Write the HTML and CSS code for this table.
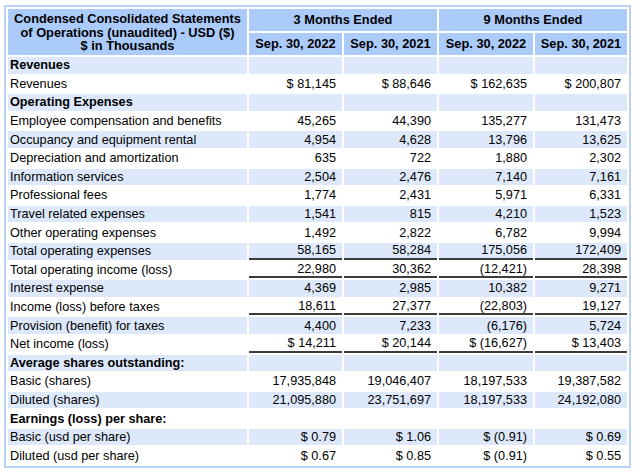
FILE: index.html
```html
<!DOCTYPE html>
<html>
<head>
<meta charset="utf-8">
<link rel="stylesheet" href="styles.css">
</head>
<body>
<div class="frame">
<table class="report">
<colgroup>
<col class="c-label"><col class="c-num"><col class="c-num"><col class="c-num3"><col class="c-num4">
</colgroup>
<thead>
<tr class="h1">
<th rowspan="2" class="title">Condensed Consolidated Statements<br>of Operations (unaudited) - USD ($)<br>$ in Thousands</th>
<th colspan="2">3 Months Ended</th>
<th colspan="2">9 Months Ended</th>
</tr>
<tr class="h2">
<th>Sep. 30, 2022</th><th>Sep. 30, 2021</th><th>Sep. 30, 2022</th><th>Sep. 30, 2021</th>
</tr>
</thead>
<tbody>
<tr class="sec"><td class="pl">Revenues</td><td></td><td></td><td></td><td></td></tr>
<tr><td class="pl">Revenues</td><td>$ 81,145</td><td>$ 88,646</td><td>$ 162,635</td><td>$ 200,807</td></tr>
<tr class="sec"><td class="pl">Operating Expenses</td><td></td><td></td><td></td><td></td></tr>
<tr><td class="pl">Employee compensation and benefits</td><td>45,265</td><td>44,390</td><td>135,277</td><td>131,473</td></tr>
<tr><td class="pl">Occupancy and equipment rental</td><td>4,954</td><td>4,628</td><td>13,796</td><td>13,625</td></tr>
<tr><td class="pl">Depreciation and amortization</td><td>635</td><td>722</td><td>1,880</td><td>2,302</td></tr>
<tr><td class="pl">Information services</td><td>2,504</td><td>2,476</td><td>7,140</td><td>7,161</td></tr>
<tr><td class="pl">Professional fees</td><td>1,774</td><td>2,431</td><td>5,971</td><td>6,331</td></tr>
<tr><td class="pl">Travel related expenses</td><td>1,541</td><td>815</td><td>4,210</td><td>1,523</td></tr>
<tr><td class="pl">Other operating expenses</td><td>1,492</td><td>2,822</td><td>6,782</td><td>9,994</td></tr>
<tr class="tot"><td class="pl">Total operating expenses</td><td>58,165</td><td>58,284</td><td>175,056</td><td>172,409</td></tr>
<tr class="tot"><td class="pl">Total operating income (loss)</td><td>22,980</td><td>30,362</td><td>(12,421)</td><td>28,398</td></tr>
<tr><td class="pl">Interest expense</td><td>4,369</td><td>2,985</td><td>10,382</td><td>9,271</td></tr>
<tr class="tot"><td class="pl">Income (loss) before taxes</td><td>18,611</td><td>27,377</td><td>(22,803)</td><td>19,127</td></tr>
<tr><td class="pl">Provision (benefit) for taxes</td><td>4,400</td><td>7,233</td><td>(6,176)</td><td>5,724</td></tr>
<tr class="tot"><td class="pl">Net income (loss)</td><td>$ 14,211</td><td>$ 20,144</td><td>$ (16,627)</td><td>$ 13,403</td></tr>
<tr class="sec"><td class="pl">Average shares outstanding:</td><td></td><td></td><td></td><td></td></tr>
<tr><td class="pl">Basic (shares)</td><td>17,935,848</td><td>19,046,407</td><td>18,197,533</td><td>19,387,582</td></tr>
<tr><td class="pl">Diluted (shares)</td><td>21,095,880</td><td>23,751,697</td><td>18,197,533</td><td>24,192,080</td></tr>
<tr class="sec"><td class="pl">Earnings (loss) per share:</td><td></td><td></td><td></td><td></td></tr>
<tr><td class="pl">Basic (usd per share)</td><td>$ 0.79</td><td>$ 1.06</td><td>$ (0.91)</td><td>$ 0.69</td></tr>
<tr><td class="pl">Diluted (usd per share)</td><td>$ 0.67</td><td>$ 0.85</td><td>$ (0.91)</td><td>$ 0.55</td></tr>
</tbody>
</table>
</div>
</body>
</html>
```

FILE: styles.css
```css
html, body {
  margin: 0;
  padding: 0;
  background: #ffffff;
}

body {
  font-family: "Liberation Sans", Arial, sans-serif;
  color: #000000;
}

.frame {
  display: inline-block;
  margin: 5px 0 0 4px;
  border: 2px solid #b9d3f8;
}

.report {
  border-collapse: separate;
  border-spacing: 2px;
  table-layout: fixed;
  width: 623px;
  font-size: 12.7px;
}

.c-label { width: 239px; }
.c-num { width: 93px; }
.c-num3 { width: 94px; }
.c-num4 { width: 92px; }

.report th {
  background: #abcbfb;
  font-weight: bold;
  font-size: 12.8px;
  text-align: center;
  padding: 0;
  height: 22px;
  line-height: 14px;
}

.report th.title {
  line-height: 13.5px;
  padding-top: 1px;
}

.report td {
  padding: 0 6px 0 2px;
  height: 16.6px;
  line-height: 14px;
  text-align: right;
  white-space: nowrap;
  box-sizing: border-box;
}

.report td.pl {
  text-align: left;
}

.report tbody tr:nth-child(odd) td {
  background: #dde9fb;
}

.report tr.sec td.pl {
  font-weight: bold;
}

.report tr.tot td:not(.pl) {
  border-bottom: 2px solid #3c3c3c;
}
```
